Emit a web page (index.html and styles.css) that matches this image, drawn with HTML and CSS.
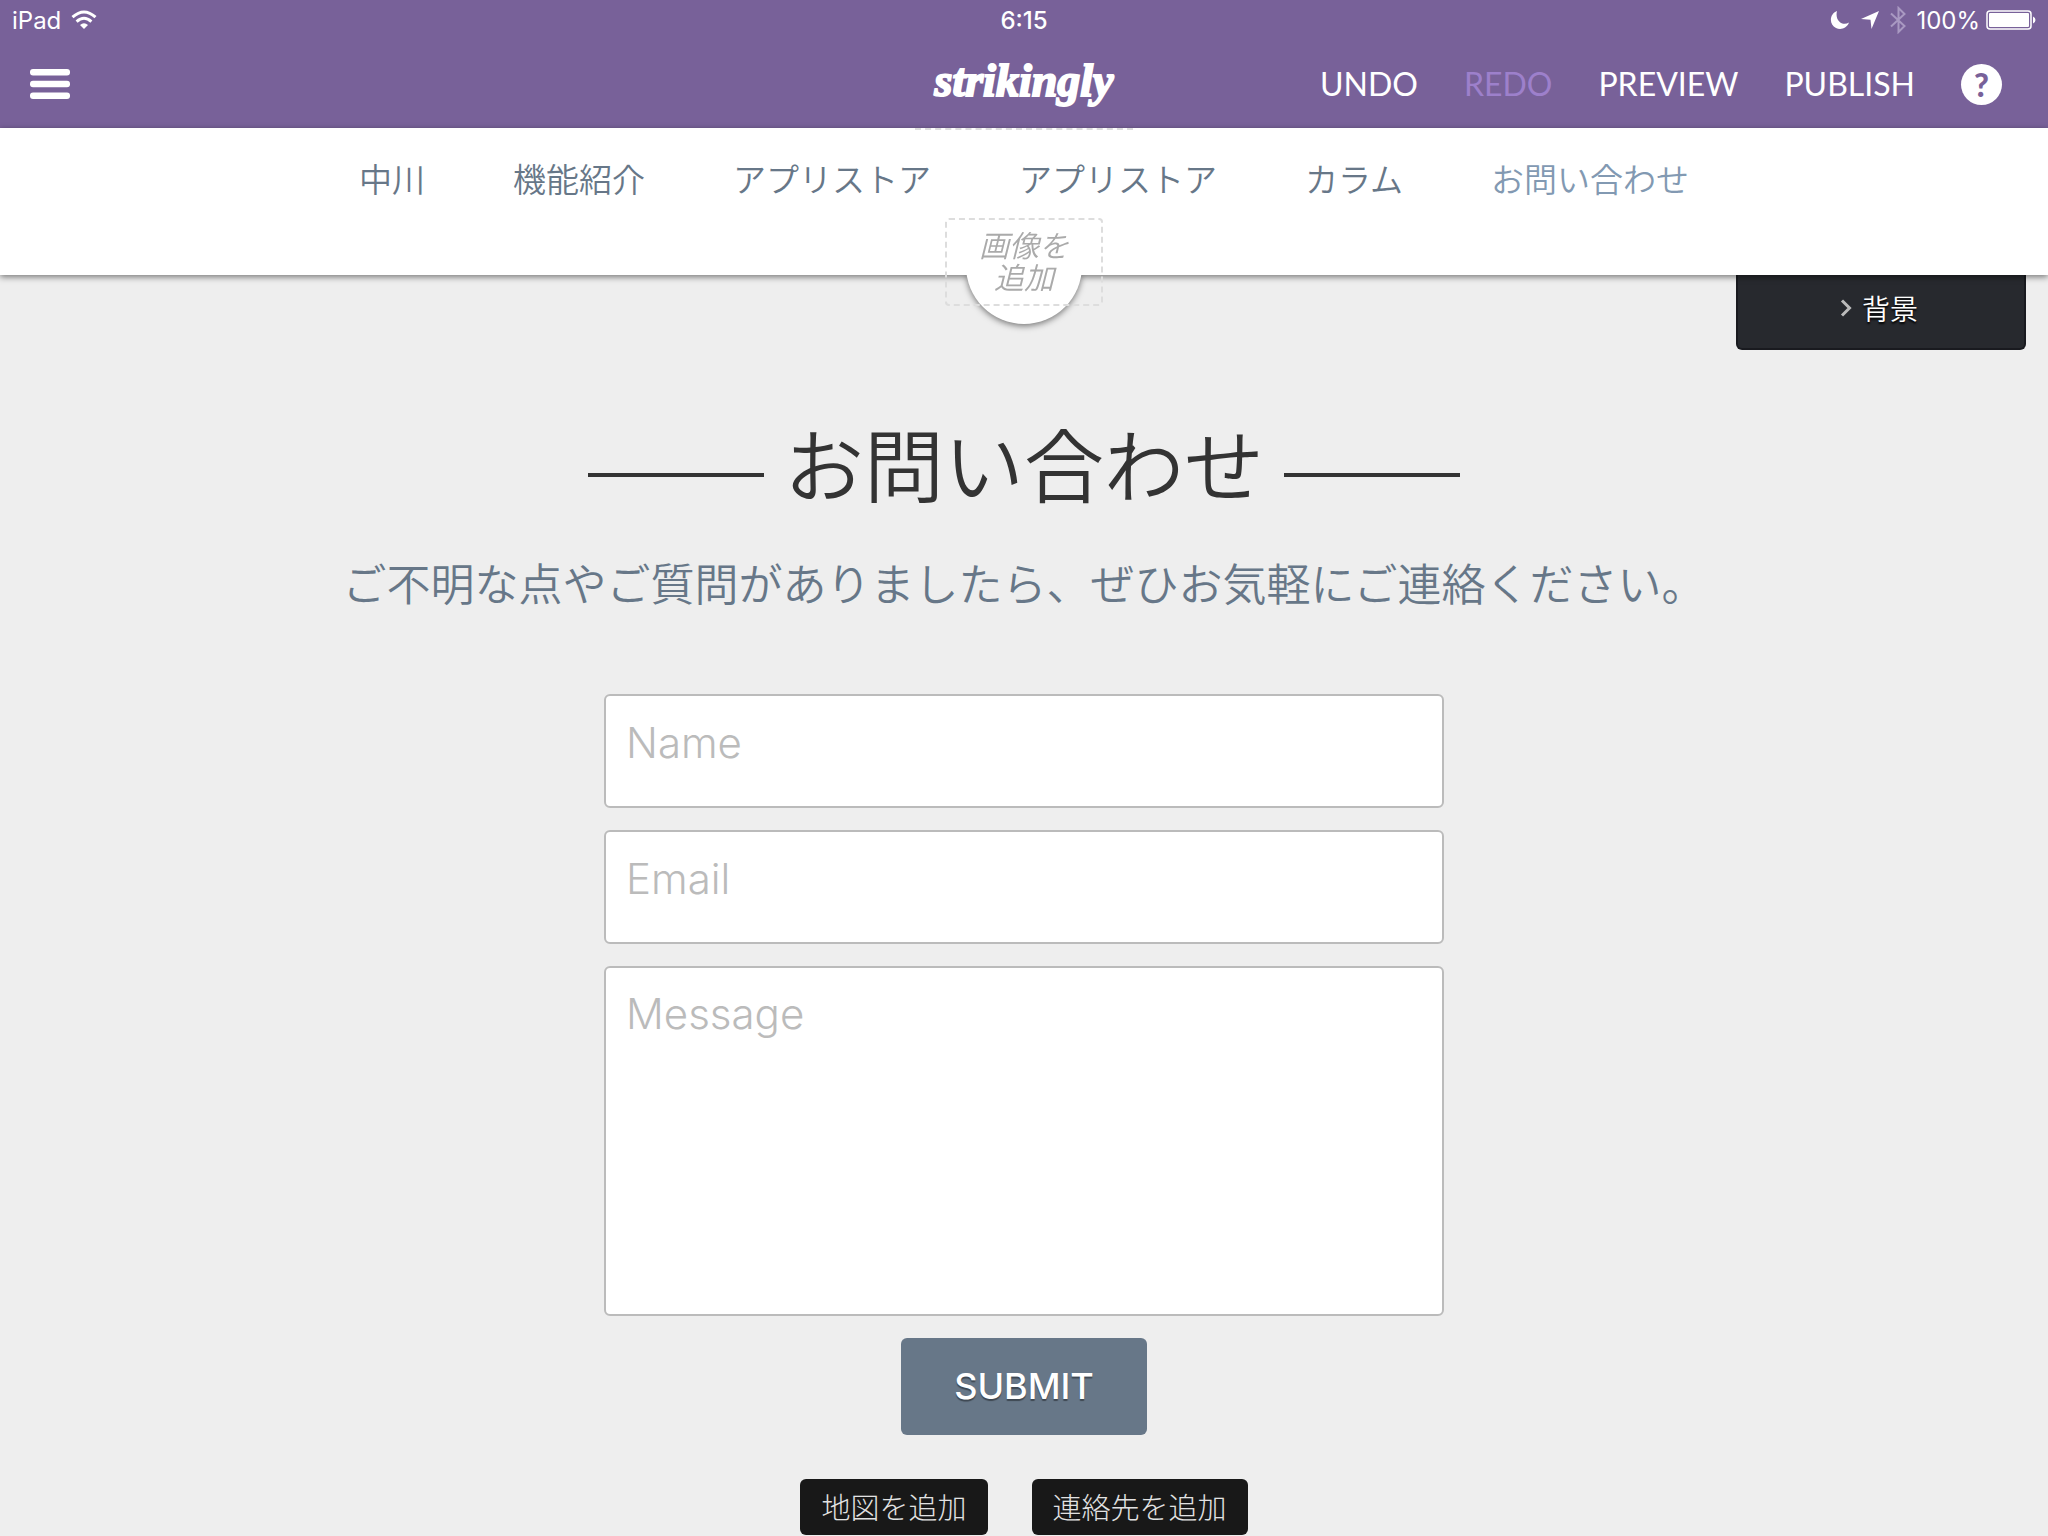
FILE: index.html
```html
<!DOCTYPE html>
<html lang="ja">
<head>
    <title>お問い合わせ</title>
    <meta charset="UTF-8">
    <meta name="viewport" content="width=device-width, initial-scale=1.0">
    <link rel="stylesheet" href="styles.css">
</head>

<body>
    <header class="topbar">
        <div class="status">
            <div class="status-side">
                <span>iPad</span>
                <svg class="wifi" width="26" height="20" viewBox="0 0 26 20" fill="none" stroke="#fff" stroke-width="3">
                    <path d="M1.5 7.2 Q13 -3.2 24.5 7.2"/>
                    <path d="M5.6 11.6 Q13 5 20.4 11.6"/>
                    <path d="M13 19 L9 14.9 Q13 11.4 17 14.9 Z" fill="#fff" stroke="none"/>
                </svg>
            </div>
            <div class="clock">6:15</div>
            <div class="status-side status-right">
                <svg width="20" height="20" viewBox="0 0 20 20" fill="#fff">
                    <path d="M7 1 C-1 4 -1 15 6 18 C11 20.300 17 18 19 12.500 C13 16.500 4.500 11 7 1 Z"/>
                </svg>
                <svg class="arrow" width="20" height="20" viewBox="0 0 20 20" fill="#fff">
                    <path d="M19 1 L11.500 19 L10.500 9.800 L1 9 Z"/>
                </svg>
                <svg class="bluetooth" width="16" height="28" viewBox="0 0 16 28" fill="none" stroke="#a999c2" stroke-width="2">
                    <path d="M1 7.500 L14.500 20 L8.500 26 V2 L14.500 8 L1 20.500"/>
                </svg>
                <span>100%</span>
                <svg class="battery" width="50" height="20" viewBox="0 0 50 20">
                    <rect x="1" y="1" width="44" height="18" rx="3" fill="none" stroke="#fff" stroke-width="1.500"/>
                    <rect x="3" y="3" width="40" height="14" rx="1" fill="#fff"/>
                    <path d="M47 6.500 Q49.500 7.500 49.500 10 Q49.500 12.500 47 13.500 Z" fill="#fff"/>
                </svg>
            </div>
        </div>
        <div class="toolbar">
            <button class="menu" type="button" aria-label="Menu">
                <svg width="40" height="30" viewBox="0 0 40 30" fill="#fff">
                    <rect y="0" width="40" height="6.500" rx="3"/>
                    <rect y="11.700" width="40" height="6.500" rx="3"/>
                    <rect y="23.400" width="40" height="6.500" rx="3"/>
                </svg>
            </button>
            <div class="logo">strikingly</div>
            <div class="actions">
                <button type="button">UNDO</button>
                <button type="button" disabled>REDO</button>
                <button type="button">PREVIEW</button>
                <button type="button">PUBLISH</button>
                <button class="help" type="button">?</button>
            </div>
        </div>
    </header>

    <div class="nav-wrap">
        <div class="nav-shape">
            <nav class="nav">
                <a href="#">中川</a>
                <a href="#">機能紹介</a>
                <a href="#">アプリストア</a>
                <a href="#">アプリストア</a>
                <a href="#">カラム</a>
                <a class="current" href="#contact">お問い合わせ</a>
            </nav>
        </div>
        <div class="logo-edge"></div>
        <button class="add-image" type="button">画像を<br>追加</button>
    </div>

    <main class="contact" id="contact">
        <button class="background-tab" type="button">
            <svg width="12" height="18" viewBox="0 0 12 18" fill="none" stroke="#bbb" stroke-width="3">
                <path d="M2 1.500 L9.500 9 L2 16.500"/>
            </svg>
            背景
        </button>

        <h1>お問い合わせ</h1>
        <p class="lead">ご不明な点やご質問がありましたら、ぜひお気軽にご連絡ください。</p>

        <form class="contact-form">
            <input type="text" name="name" placeholder="Name" aria-label="Name">
            <input type="email" name="email" placeholder="Email" aria-label="Email">
            <textarea name="message" placeholder="Message" aria-label="Message"></textarea>
            <button class="submit" type="submit">SUBMIT</button>
        </form>

        <div class="extras">
            <button type="button">地図を追加</button>
            <button type="button">連絡先を追加</button>
        </div>
    </main>
</body>
</html>
```
FILE: styles.css
```css
* {
    box-sizing: border-box;
}

body {
    margin: 0;
    background-color: #eee;
    font-family: Inter, "Noto Sans CJK JP", sans-serif;
    font-weight: 300;
}

button {
    margin: 0;
    padding: 0;
    border: none;
    background: none;
    color: inherit;
    font: inherit;
    cursor: pointer;
}

/* top bar */
.topbar {
    height: 128px;
    background-color: #786199;
    color: #fff;
}

.status {
    display: flex;
    align-items: center;
    height: 40px;
    padding: 0 12px;
    font-size: 24px;
    font-weight: 400;
}

.status-side {
    display: flex;
    flex: 1;
    align-items: center;
    gap: 10px;
}

.status-right {
    justify-content: flex-end;
}

.clock {
    font-weight: 500;
}

.battery {
    margin-left: -4px;
}

.toolbar {
    display: flex;
    align-items: center;
    height: 88px;
    padding: 0 30px;
}

.menu {
    display: flex;
    flex: 1;
}

.logo {
    font-family: "Liberation Serif", serif;
    font-size: 46px;
    font-style: italic;
    font-weight: 700;
    line-height: 80px;
    padding-bottom: 6px;
    -webkit-text-stroke: 2px #fff;
}

.actions {
    display: flex;
    flex: 1;
    align-items: center;
    justify-content: flex-end;
    gap: 46px;
    font-family: Lato, sans-serif;
    font-size: 32px;
    font-weight: 400;
}

.actions button {
    padding-bottom: 2px;
}

.actions button:disabled {
    color: #9d80cb;
}

.actions .help {
    width: 41px;
    height: 41px;
    margin-right: 16px;
    padding: 0;
    border-radius: 50%;
    background-color: #fff;
    color: #786199;
    font-weight: 900;
    line-height: 41px;
}

/* site navigation */
.nav-wrap {
    position: relative;
    z-index: 1;
}

.nav-shape {
    filter: drop-shadow(0 2px 3px rgba(0, 0, 0, 0.5));
}

.nav-shape::after {
    content: "";
    position: absolute;
    z-index: -1;
    bottom: -49px;
    left: calc(50% - 58px);
    width: 116px;
    height: 116px;
    border-radius: 50%;
    background-color: #fff;
}

.nav {
    display: flex;
    justify-content: center;
    gap: 88px;
    height: 147px;
    padding-top: 28px;
    background-color: #fff;
}

.nav a {
    color: #677788;
    font-size: 33px;
    font-weight: 350;
    line-height: 48px;
    text-decoration: none;
}

.nav .current {
    color: #8299b2;
}

.logo-edge {
    position: absolute;
    top: 0;
    left: calc(50% - 109px);
    width: 218px;
    border-top: 2px dashed #ddd;
}

.add-image {
    position: absolute;
    top: 90px;
    left: calc(50% - 79px);
    width: 158px;
    height: 88px;
    border: 2px dashed #ddd;
    border-radius: 4px;
    color: #aaa;
    font-size: 30px;
    font-style: italic;
    font-weight: 350;
    line-height: 32px;
}

/* contact section */
.contact {
    position: relative;
    display: flex;
    flex-direction: column;
    align-items: center;
    padding-top: 134px;
}

.background-tab {
    position: absolute;
    top: 0;
    right: 22px;
    display: flex;
    align-items: center;
    justify-content: center;
    gap: 10px;
    width: 290px;
    height: 75px;
    padding: 0 4px 8px 0;
    border: 2px solid #191a1f;
    border-top: none;
    border-radius: 0 0 6px 6px;
    background-color: #27292e;
    color: #fff;
    font-size: 28px;
    font-weight: 350;
    text-shadow: 0 2px 2px #000;
}

h1 {
    display: flex;
    align-items: center;
    gap: 20px;
    margin: 0;
    color: #333;
    font-size: 80px;
    font-weight: 350;
    line-height: 116px;
}

h1::before,
h1::after {
    content: "";
    width: 176px;
    height: 4px;
    margin-top: 16px;
    background-color: #333;
}

.lead {
    margin: 28px 0 77px;
    color: #677788;
    font-size: 44px;
    font-weight: 350;
    line-height: 64px;
}

.contact-form {
    display: flex;
    flex-direction: column;
    gap: 22px;
    width: 840px;
    max-width: 100%;
}

.contact-form input,
.contact-form textarea {
    width: 100%;
    padding: 20px;
    border: 2px solid #bbb;
    border-radius: 6px;
    background-color: #fff;
    font-family: Inter, sans-serif;
    font-size: 42px;
    font-weight: 300;
    line-height: 52px;
    resize: none;
}

.contact-form input {
    height: 114px;
    padding-bottom: 38px;
}

.contact-form textarea {
    display: block;
    height: 350px;
}

.contact-form ::placeholder {
    color: #bbb;
}

.submit {
    align-self: center;
    width: 246px;
    height: 97px;
    padding-bottom: 2px;
    border-radius: 6px;
    background-color: #677788;
    color: #fff;
    font-size: 36px;
    font-weight: 500;
    text-shadow: 0 2px 1px rgba(0, 0, 0, 0.4);
}

.extras {
    display: flex;
    gap: 44px;
    margin-top: 44px;
}

.extras button {
    height: 56px;
    padding: 0 21px 2px;
    border-radius: 6px;
    background-color: #181818;
    color: #e2e2e2;
    font-size: 29px;
}
```
